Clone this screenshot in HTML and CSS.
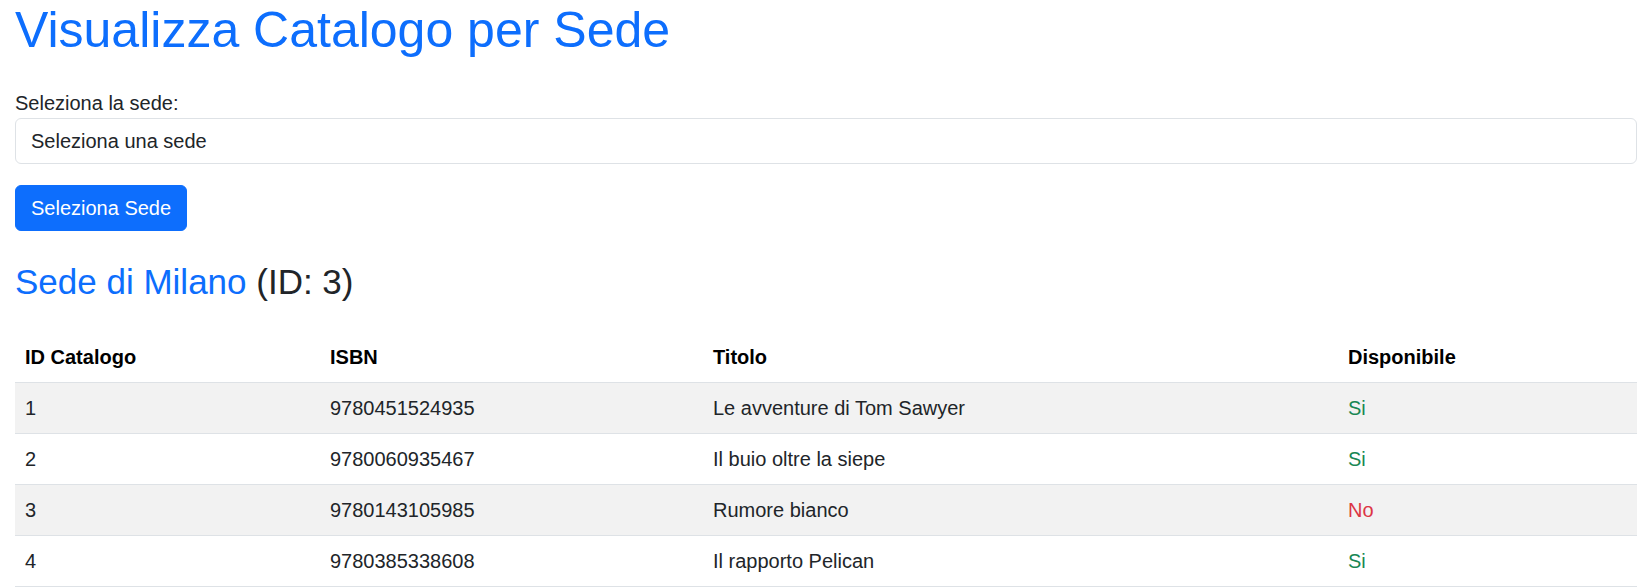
FILE: index.html
```html
<!DOCTYPE html>
<html lang="it">
<head>
<meta charset="utf-8">
<title>Visualizza Catalogo per Sede</title>
<link rel="stylesheet" href="styles.css">
</head>
<body>
<div class="container">
  <h1 class="title">Visualizza Catalogo per Sede</h1>
  <form class="sede-form">
    <label class="form-label" for="sede">Seleziona la sede:</label>
    <select class="form-select" id="sede">
      <option>Seleziona una sede</option>
    </select>
    <button type="button" class="btn">Seleziona Sede</button>
  </form>
  <h3 class="sede-title"><span class="sede-name">Sede di Milano</span> (ID: 3)</h3>
  <table class="table">
    <colgroup>
      <col class="c1"><col class="c2"><col class="c3"><col class="c4">
    </colgroup>
    <thead>
      <tr><th>ID Catalogo</th><th>ISBN</th><th>Titolo</th><th>Disponibile</th></tr>
    </thead>
    <tbody>
      <tr class="odd"><td>1</td><td>9780451524935</td><td>Le avventure di Tom Sawyer</td><td class="yes">Si</td></tr>
      <tr><td>2</td><td>9780060935467</td><td>Il buio oltre la siepe</td><td class="yes">Si</td></tr>
      <tr class="odd"><td>3</td><td>9780143105985</td><td>Rumore bianco</td><td class="no">No</td></tr>
      <tr><td>4</td><td>9780385338608</td><td>Il rapporto Pelican</td><td class="yes">Si</td></tr>
    </tbody>
  </table>
</div>
</body>
</html>
```
FILE: styles.css
```css
html, body {
  margin: 0;
  padding: 0;
  background: #ffffff;
}
body {
  font-family: "Liberation Sans", Arial, sans-serif;
  font-size: 20px;
  line-height: 30px;
  color: #212529;
}
.container {
  padding: 0 15px;
}
.title {
  margin: 0 0 28px 0;
  font-size: 50px;
  line-height: 60px;
  font-weight: 400;
  color: #0d6efd;
}
.sede-form {
  display: flex;
  flex-direction: column;
  align-items: flex-start;
  margin: 0;
}
.form-label {
  display: block;
  line-height: 30px;
}
.form-select {
  -webkit-appearance: none;
  appearance: none;
  box-sizing: border-box;
  width: 100%;
  height: 46px;
  padding: 7px 15px;
  font-family: inherit;
  font-size: 20px;
  line-height: 30px;
  color: #212529;
  background: #ffffff;
  border: 1px solid #dee2e6;
  border-radius: 6px;
  margin: 0;
}
.btn {
  box-sizing: border-box;
  margin-top: 21px;
  height: 46px;
  padding: 7px 15px;
  font-family: inherit;
  font-size: 20px;
  line-height: 30px;
  color: #ffffff;
  background: #0d6efd;
  border: 1px solid #0d6efd;
  border-radius: 6px;
}
.sede-title {
  margin: 30px 0 0 0;
  font-size: 35px;
  line-height: 42px;
  font-weight: 400;
  color: #212529;
}
.sede-name {
  color: #0d6efd;
}
.table {
  margin-top: 29px;
  width: 100%;
  border-collapse: collapse;
  table-layout: fixed;
}
.c1 { width: 305px; }
.c2 { width: 383px; }
.c3 { width: 635px; }
.table th,
.table td {
  padding: 10px;
  text-align: left;
  vertical-align: top;
  border-bottom: 1px solid #dee2e6;
  line-height: 30px;
}
.table th {
  font-weight: 700;
  color: #000000;
}
.table tr.odd td {
  background: #f2f2f2;
}
.table td.yes { color: #198754; }
.table td.no { color: #dc3545; }
```
